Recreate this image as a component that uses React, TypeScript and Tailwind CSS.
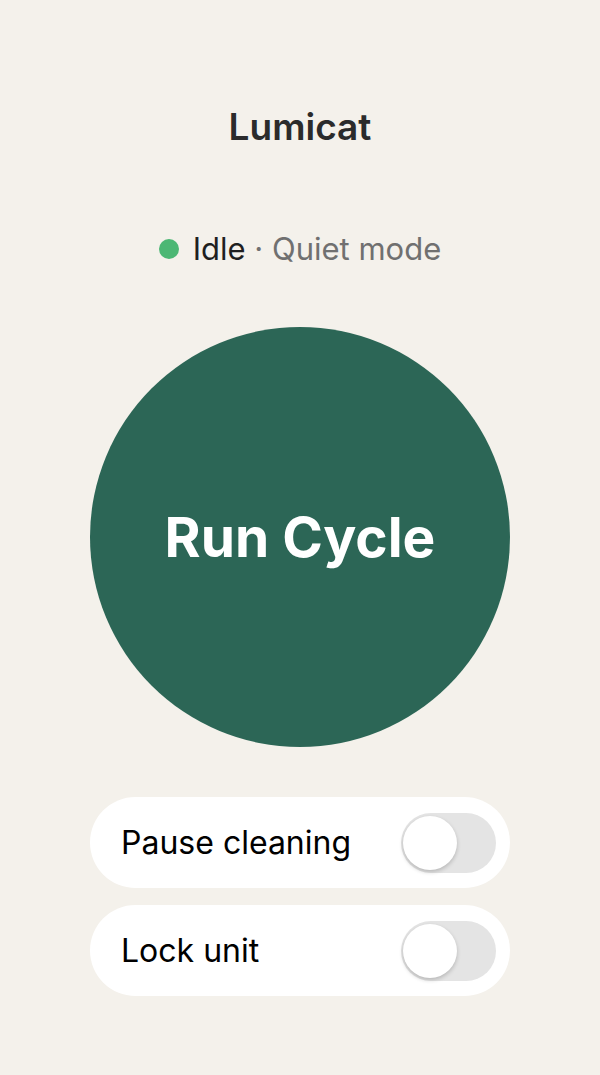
import { useState } from "react";

function Toggle({ on, onChange }: { on: boolean; onChange: () => void }) {
  return (
    <button
      onClick={onChange}
      className={`relative h-[60px] w-[95px] shrink-0 rounded-full transition-colors ${
        on ? "bg-[#2c6656]" : "bg-[#e4e4e4]"
      }`}
    >
      <span
        className={`absolute top-[3px] h-[54px] w-[54px] rounded-full bg-white shadow-[0_2px_4px_rgba(0,0,0,0.2)] transition-all ${
          on ? "left-[38px]" : "left-[2px]"
        }`}
      />
    </button>
  );
}

export default function App() {
  const [paused, setPaused] = useState(false);
  const [locked, setLocked] = useState(false);

  return (
    <main
      className="flex min-h-[1075px] flex-col items-center bg-[#f4f1eb] text-[#1b1b1b]"
      style={{ fontFamily: "Inter, 'Noto Sans', sans-serif" }}
    >
      <h1 className="mt-[105px] text-[37px] font-semibold leading-[44px] text-[#2b2b2b]">
        Lumicat
      </h1>

      <div className="mt-[79px] flex items-center gap-[14px] text-[31px] leading-[42px]">
        <span className="h-[20px] w-[20px] rounded-full bg-[#4cb774]" />
        <span>
          <span className="text-[#1f1f1f]">Idle</span>
          <span className="text-[#707070]"> · Quiet mode</span>
        </span>
      </div>

      <button className="mt-[57px] flex h-[420px] w-[420px] items-center justify-center rounded-full bg-[#2c6656] text-[55px] font-bold text-white">
        Run Cycle
      </button>

      <div className="mt-[50px] flex w-[420px] flex-col gap-[17px]">
        <div className="flex h-[91px] items-center justify-between rounded-full bg-white pl-[31px] pr-[14px]">
          <span className="text-[32px] text-black">Pause cleaning</span>
          <Toggle on={paused} onChange={() => setPaused((p) => !p)} />
        </div>
        <div className="flex h-[91px] items-center justify-between rounded-full bg-white pl-[31px] pr-[14px]">
          <span className="text-[32px] text-black">Lock unit</span>
          <Toggle on={locked} onChange={() => setLocked((l) => !l)} />
        </div>
      </div>
    </main>
  );
}
